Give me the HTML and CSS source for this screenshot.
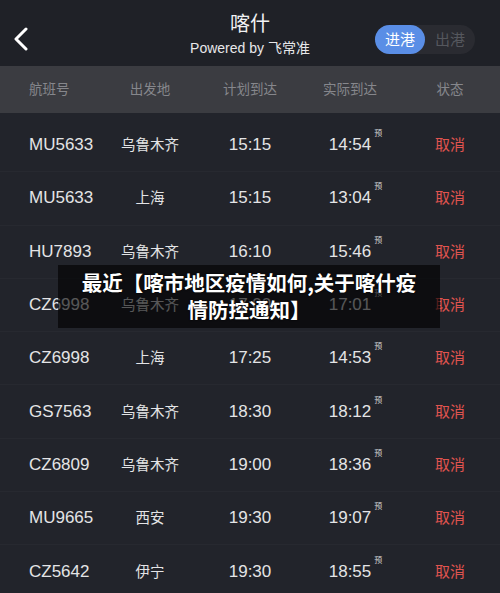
FILE: index.html
```html
<!DOCTYPE html>
<html>
<head>
  <title>喀什 航班</title>
  <link rel="stylesheet" href="styles.css">
</head>
<body>
  <div class="screen">
    <div class="topbar">
      <svg class="back" width="16" height="24" viewBox="0 0 16 24">
        <path d="M13 2 L3 12 L13 22" fill="none" stroke="#fff" stroke-width="3" stroke-linecap="round" stroke-linejoin="round"/>
      </svg>
      <div class="title">
        <div class="city">喀什</div>
        <div class="powered">Powered by 飞常准</div>
      </div>
      <div class="toggle">
        <span class="tab active">进港</span>
        <span class="tab">出港</span>
      </div>
    </div>

    <div class="row head">
      <span class="flight">航班号</span>
      <span>出发地</span>
      <span>计划到达</span>
      <span>实际到达</span>
      <span>状态</span>
    </div>

    <div class="list" id="list"></div>

    <div class="caption">最近【喀市地区疫情如何,关于喀什疫<br>情防控通知】</div>
  </div>

  <script>
    var flights = [
      ['MU5633', '乌鲁木齐', '15:15', '14:54'],
      ['MU5633', '上海', '15:15', '13:04'],
      ['HU7893', '乌鲁木齐', '16:10', '15:46'],
      ['CZ6998', '乌鲁木齐', '17:00', '17:01'],
      ['CZ6998', '上海', '17:25', '14:53'],
      ['GS7563', '乌鲁木齐', '18:30', '18:12'],
      ['CZ6809', '乌鲁木齐', '19:00', '18:36'],
      ['MU9665', '西安', '19:30', '19:07'],
      ['CZ5642', '伊宁', '19:30', '18:55']
    ];

    var list = document.getElementById('list');
    flights.forEach(function(f) {
      var row = document.createElement('div');
      row.className = 'row';
      row.innerHTML =
        '<span class="flight num">' + f[0] + '</span>' +
        '<span class="city-name">' + f[1] + '</span>' +
        '<span class="num">' + f[2] + '</span>' +
        '<span class="num actual">' + f[3] + '<sup>预</sup></span>' +
        '<span class="status">取消</span>';
      list.appendChild(row);
    });
  </script>
</body>
</html>
```

FILE: styles.css
```css
body {
  margin: 0;
  background-color: #22242b;
  font-family: "Liberation Sans", "Noto Sans CJK SC", sans-serif;
  color: #e6e6e8;
}
.screen {
  position: relative;
  width: 500px;
  height: 593px;
  overflow: hidden;
}
.topbar {
  height: 66px;
  background-color: #1f2127;
  display: flex;
  align-items: center;
  position: relative;
}
.back {
  margin-left: 13px;
  margin-top: 12px;
}
.title {
  position: absolute;
  left: 0;
  right: 0;
  text-align: center;
  top: 11px;
  pointer-events: none;
}
.city {
  font-size: 20px;
  line-height: 26px;
  color: #f2f2f4;
}
.powered {
  font-size: 14px;
  line-height: 22px;
  color: #e8e8ea;
}
.toggle {
  margin-left: auto;
  margin-right: 25px;
  margin-top: 12px;
  display: flex;
  background-color: #2a2b31;
  border-radius: 15px;
  height: 29px;
}
.tab {
  width: 50px;
  line-height: 29px;
  text-align: center;
  font-size: 15px;
  color: #55575d;
  border-radius: 15px;
}
.tab.active {
  background-color: #5a8ee6;
  color: #fff;
}
.row {
  display: grid;
  grid-template-columns: 100px 100px 100px 100px 100px;
  align-items: center;
  height: 53.3px;
  border-bottom: 1px solid #272930;
  box-sizing: border-box;
}
.row > span {
  text-align: center;
  line-height: 20px;
  height: 20px;
}
.row > .flight {
  text-align: left;
  padding-left: 29px;
}
.row.head {
  height: 47px;
  background-color: #3b3c41;
  border-bottom: none;
  font-size: 13.5px;
  color: #86878c;
}
.list {
  padding-top: 6px;
}
.num {
  font-size: 17px;
  color: #e4e4e6;
}
.city-name {
  font-size: 14.5px;
  color: #e4e4e6;
}
.actual {
  position: relative;
}
.actual sup {
  position: absolute;
  font-size: 8px;
  line-height: 10px;
  top: -6px;
  margin-left: 3px;
  color: #d0d0d2;
}
.status {
  font-size: 15px;
  color: #e0544f;
}
.caption {
  position: absolute;
  left: 58px;
  top: 265px;
  width: 382px;
  height: 63px;
  box-sizing: border-box;
  padding-top: 4px;
  background-color: rgba(0, 0, 0, 0.62);
  color: #fff;
  font-family: "Noto Sans CJK SC", sans-serif;
  font-weight: bold;
  font-size: 20.5px;
  line-height: 27px;
  text-align: center;
  text-shadow: 0 0 2px #000;
}
```
